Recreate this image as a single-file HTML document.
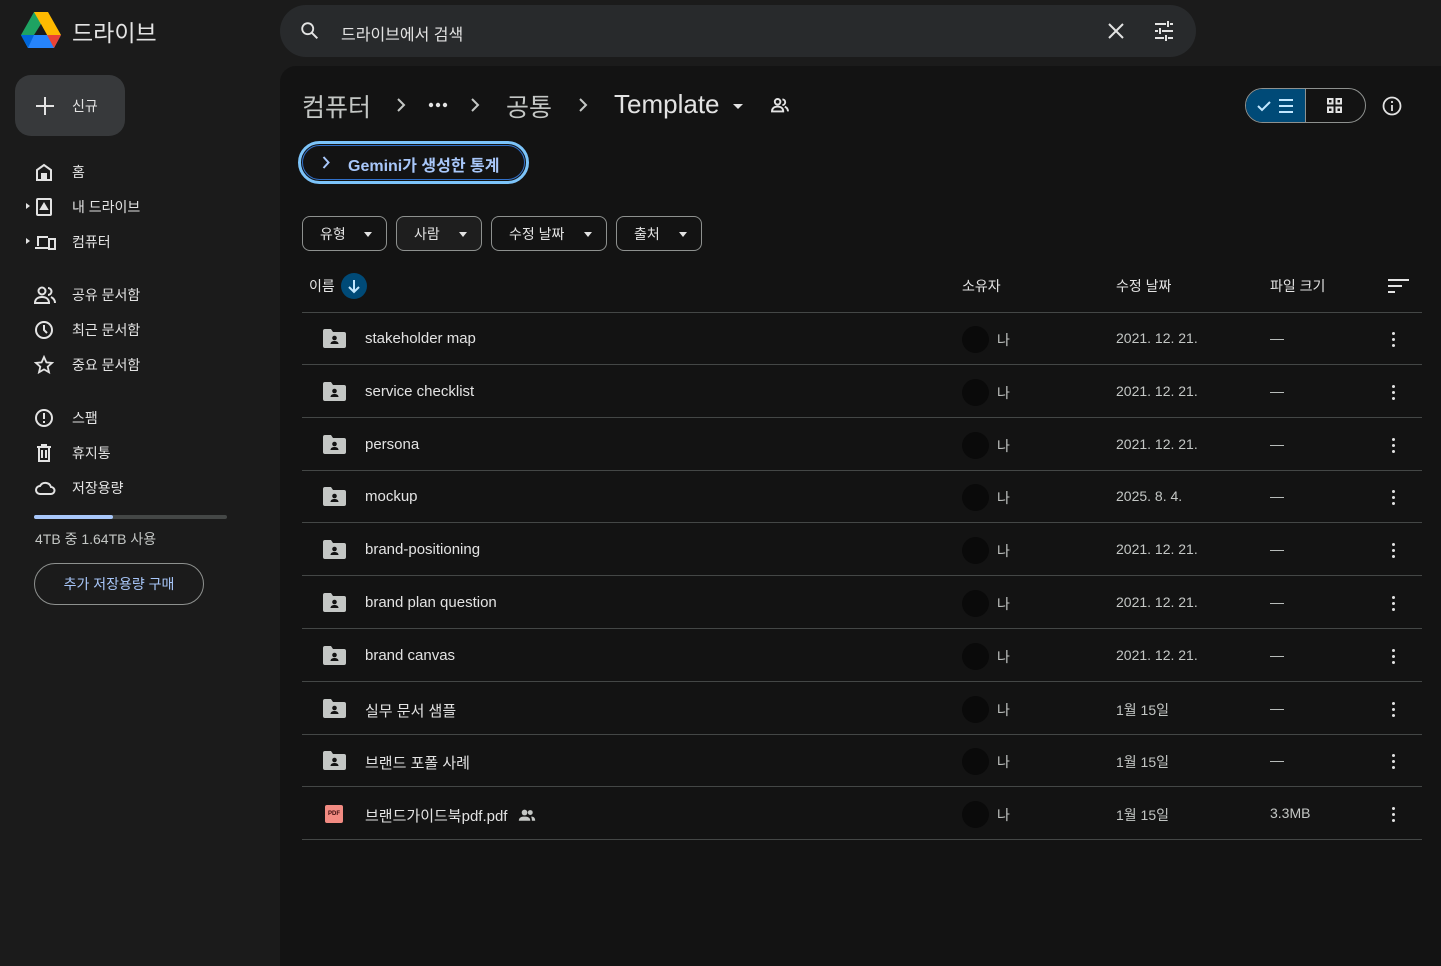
<!DOCTYPE html>
<html><head><meta charset="utf-8"><style>
*{box-sizing:border-box;margin:0;padding:0}
body{width:1441px;height:966px;background:#1b1b1b;font-family:"Liberation Sans","Noto Sans CJK KR",sans-serif;color:#e3e3e3;position:relative;overflow:hidden}
.a{position:absolute}
.nav{position:absolute;left:0;width:270px;height:35px;display:flex;align-items:center;font-size:14px;color:#e3e3e3}
.nav svg{position:absolute;left:34px}
.nav span{position:absolute;left:72px}
.main{position:absolute;left:280px;top:66px;width:1161px;height:900px;background:#131313;border-radius:16px 0 0 0}
.chip{position:absolute;top:216px;height:35px;border:1px solid #8e918f;border-radius:8px;font-size:14px;display:flex;align-items:center;padding-left:17px}
.chip::after{content:"";position:absolute;right:14px;top:15px;border:4px solid transparent;border-top:5px solid #e3e3e3}
.row{position:absolute;left:302px;width:1120px;height:53px;border-bottom:1px solid #444746;font-size:15px}
.row .ic{position:absolute;left:21px;top:17px}
.row .nm{position:absolute;left:63px;top:18px;color:#e3e3e3}
.row .av{position:absolute;left:660px;top:14px;width:27px;height:27px;border-radius:50%;background:#0a0a0a}
.row .me{position:absolute;left:695px;top:18px;color:#c4c7c5;font-size:14px}
.row .dt{position:absolute;left:814px;top:18px;color:#c4c7c5;font-size:14px}
.row .sz{position:absolute;left:968px;top:18px;color:#c4c7c5;font-size:14px}
.row .mr{position:absolute;left:1090px;top:20px;width:4px}
.mr i{display:block;width:3px;height:3px;background:#e3e3e3;border-radius:50%;margin-bottom:3px}
.chev{position:absolute;top:98px}
</style></head><body>
<svg class="a" style="left:21px;top:12px" width="40" height="36" viewBox="0 0 40 36">
<path d="M13 0h14l-7 12z M13 0L0 23l7 13 13-24z" fill="#1ea362"/>
<path d="M27 0l13 23h-14L13 0z" fill="#ffba00"/>
<path d="M0 23h40l-7 13H7z" fill="#2684fc"/>
<path d="M26 23h14l-7 13z" fill="#ea4335"/>
<path d="M0 23l7 13 6-13z" fill="#0066da"/>
<path d="M13 23l7-11 6 11z" fill="#1b1b1b"/>
</svg>
<div class="a" style="left:72px;top:14px;font-size:23px;color:#e3e3e3">드라이브</div>
<div class="a" style="left:280px;top:5px;width:916px;height:52px;background:#282a2c;border-radius:26px"></div>
<svg class="a" style="left:299px;top:20px" width="22" height="22" viewBox="0 0 24 24"><circle cx="9.5" cy="9.5" r="6" stroke="#e3e3e3" stroke-width="2" fill="none"/><path d="M14 14l6 6" stroke="#e3e3e3" stroke-width="2.2"/></svg>
<div class="a" style="left:341px;top:21px;font-size:16px;color:#e3e3e3">드라이브에서 검색</div>
<svg class="a" style="left:1106px;top:21px" width="20" height="20" viewBox="0 0 20 20"><path d="M3 3l14 14M17 3L3 17" stroke="#e3e3e3" stroke-width="2"/></svg>
<svg class="a" style="left:1153px;top:20px" width="22" height="22" viewBox="0 0 22 22" stroke="#e3e3e3" stroke-width="2"><path d="M2 4h11M17 4h3M15 1v6M2 11h3M9 11h11M7 8v6M2 18h9M15 18h5M13 15v6"/></svg>
<div class="a" style="left:15px;top:75px;width:110px;height:61px;background:#37393b;border-radius:16px"></div>
<svg class="a" style="left:35px;top:96px" width="20" height="20"><path d="M10 1v18M1 10h18" stroke="#e3e3e3" stroke-width="2"/></svg>
<div class="a" style="left:72px;top:96px;font-size:14px">신규</div>
<div class="nav" style="top:154px"><svg width="20" height="20" viewBox="0 0 20 20" fill="none" stroke="#e3e3e3" stroke-width="2"><path d="M3 18V8l7-5 7 5v10z"/><rect x="8" y="12" width="4" height="6" fill="#e3e3e3"/></svg><span>홈</span></div>
<div class="nav" style="top:189px"><div class="a" style="left:26px;top:14px;border:3px solid transparent;border-left:4px solid #e3e3e3"></div><svg width="20" height="20" viewBox="0 0 20 20" fill="none" stroke="#e3e3e3" stroke-width="2"><rect x="3" y="2" width="14" height="16" rx="1"/><path d="M7 12l3-5 3 5z" fill="#e3e3e3"/></svg><span>내 드라이브</span></div>
<div class="nav" style="top:224px"><div class="a" style="left:26px;top:14px;border:3px solid transparent;border-left:4px solid #e3e3e3"></div><svg width="22" height="20" viewBox="0 0 22 20" fill="none" stroke="#e3e3e3" stroke-width="2"><path d="M4 14V5h10M1 16h13"/><rect x="15" y="7" width="6" height="10"/></svg><span>컴퓨터</span></div>
<div class="nav" style="top:277px"><svg width="22" height="20" viewBox="0 0 22 20" fill="none" stroke="#e3e3e3" stroke-width="2"><circle cx="8" cy="6" r="3.5"/><path d="M1 18c0-4 3-6 7-6s7 2 7 6z"/><path d="M14 3a3.5 3.5 0 010 7M17 12c2 1 4 3 4 6"/></svg><span>공유 문서함</span></div>
<div class="nav" style="top:312px"><svg width="20" height="20" viewBox="0 0 20 20" fill="none" stroke="#e3e3e3" stroke-width="2"><circle cx="10" cy="10" r="8"/><path d="M10 5v5l3 3"/></svg><span>최근 문서함</span></div>
<div class="nav" style="top:347px"><svg width="20" height="20" viewBox="0 0 20 20" fill="none" stroke="#e3e3e3" stroke-width="1.8"><path d="M10 2l2.4 5.4 5.6.5-4.3 3.8 1.3 5.6L10 14.4l-5 2.9 1.3-5.6L2 7.9l5.6-.5z"/></svg><span>중요 문서함</span></div>
<div class="nav" style="top:400px"><svg width="20" height="20" viewBox="0 0 20 20" fill="none" stroke="#e3e3e3" stroke-width="2"><circle cx="10" cy="10" r="8"/><path d="M10 5v6M10 13v2"/></svg><span>스팸</span></div>
<div class="nav" style="top:435px"><svg width="20" height="20" viewBox="0 0 20 20" fill="none" stroke="#e3e3e3" stroke-width="2"><path d="M3 4h14M5 4v14h10V4M8 7v8M12 7v8M8 4V2h4v2"/></svg><span>휴지통</span></div>
<div class="nav" style="top:470px"><svg width="22" height="20" viewBox="0 0 22 20" fill="none" stroke="#e3e3e3" stroke-width="2"><path d="M6 16a4 4 0 010-8 6 6 0 0111 1 3.5 3.5 0 010 7z"/></svg><span>저장용량</span></div>
<div class="a" style="left:34px;top:515px;width:193px;height:4px;background:#444746;border-radius:2px"></div>
<div class="a" style="left:34px;top:515px;width:79px;height:4px;background:#a8c7fa;border-radius:2px"></div>
<div class="a" style="left:35px;top:529px;font-size:14px;color:#c4c7c5">4TB 중 1.64TB 사용</div>
<div class="a" style="left:34px;top:563px;width:170px;height:42px;border:1px solid #8e918f;border-radius:21px;color:#a8c7fa;font-size:14px;text-align:center;line-height:40px">추가 저장용량 구매</div>

<div class="main"></div>
<div class="a" style="left:302px;top:88px;font-size:25px;color:#c4c7c5">컴퓨터</div>
<svg class="chev" style="left:396px" width="10" height="14" viewBox="0 0 10 14" fill="none" stroke="#c4c7c5" stroke-width="2"><path d="M2 1l6 6-6 6"/></svg>
<svg class="a" style="left:428px;top:102px" width="20" height="6"><circle cx="3" cy="3" r="2.2" fill="#e3e3e3"/><circle cx="10" cy="3" r="2.2" fill="#e3e3e3"/><circle cx="17" cy="3" r="2.2" fill="#e3e3e3"/></svg>
<svg class="chev" style="left:470px" width="10" height="14" viewBox="0 0 10 14" fill="none" stroke="#c4c7c5" stroke-width="2"><path d="M2 1l6 6-6 6"/></svg>
<div class="a" style="left:506px;top:88px;font-size:25px;color:#c4c7c5">공통</div>
<svg class="chev" style="left:578px" width="10" height="14" viewBox="0 0 10 14" fill="none" stroke="#c4c7c5" stroke-width="2"><path d="M2 1l6 6-6 6"/></svg>
<div class="a" style="left:614px;top:89px;font-size:26px;color:#e3e3e3">Template</div>
<div class="a" style="left:733px;top:104px;border:5px solid transparent;border-top:5px solid #e3e3e3"></div>
<svg class="a" style="left:770px;top:97px" width="20" height="16" viewBox="0 0 22 20" fill="none" stroke="#e3e3e3" stroke-width="2.4"><circle cx="8" cy="6" r="3.5"/><path d="M1 18c0-4 3-6 7-6s7 2 7 6z"/><path d="M14 3a3.5 3.5 0 010 7M17 12c2 1 4 3 4 6"/></svg>
<div class="a" style="left:298px;top:141px;width:231px;height:43px;border:3px solid #7cc4fa;border-radius:22px;background:#131313"><div style="position:absolute;inset:1px;border:1px solid #3170c9;border-radius:19px"></div></div>
<svg class="a" style="left:322px;top:156px" width="8" height="13" viewBox="0 0 8 13" fill="none" stroke="#a8c7fa" stroke-width="2"><path d="M1.5 1l5 5.5-5 5.5"/></svg>
<div class="a" style="left:348px;top:152px;font-size:16px;color:#a8c7fa;font-weight:bold">Gemini가 생성한 통계</div>
<div class="a" style="left:1245px;top:88px;width:121px;height:35px;border:1px solid #8e918f;border-radius:18px;overflow:hidden"><div style="position:absolute;left:0;top:0;width:60px;height:35px;background:#004a77;border-right:1px solid #8e918f"></div></div>
<svg class="a" style="left:1256px;top:97px" width="42" height="18" viewBox="0 0 42 18" fill="none" stroke="#c2e7ff" stroke-width="2"><path d="M2 9l4 4 8-8M23 3h14M23 9h14M23 15h14"/></svg>
<svg class="a" style="left:1326px;top:97px" width="17" height="17" viewBox="0 0 17 17" fill="none" stroke="#e3e3e3" stroke-width="2"><rect x="2" y="2" width="4.5" height="4.5"/><rect x="10.5" y="2" width="4.5" height="4.5"/><rect x="2" y="10.5" width="4.5" height="4.5"/><rect x="10.5" y="10.5" width="4.5" height="4.5"/></svg>
<svg class="a" style="left:1382px;top:96px" width="20" height="20" viewBox="0 0 20 20" fill="none" stroke="#e3e3e3" stroke-width="1.8"><circle cx="10" cy="10" r="8.5"/><path d="M10 9v6M10 5v2"/></svg>
<div class="chip" style="left:302px;width:85px">유형</div>
<div class="chip" style="left:396px;width:86px;background:#1e1e1e">사람</div>
<div class="chip" style="left:491px;width:116px">수정 날짜</div>
<div class="chip" style="left:616px;width:86px">출처</div>
<div class="a" style="left:309px;top:276px;font-size:14px">이름</div>
<div class="a" style="left:341px;top:273px;width:26px;height:26px;border-radius:50%;background:#004a77"></div>
<svg class="a" style="left:346px;top:278px" width="16" height="16" viewBox="0 0 16 16" fill="none" stroke="#c2e7ff" stroke-width="2"><path d="M8 2v12M3 9l5 5 5-5"/></svg>
<div class="a" style="left:962px;top:276px;font-size:14px">소유자</div>
<div class="a" style="left:1116px;top:276px;font-size:14px">수정 날짜</div>
<div class="a" style="left:1270px;top:276px;font-size:14px">파일 크기</div>
<svg class="a" style="left:1388px;top:279px" width="21" height="14" viewBox="0 0 21 14" stroke="#e3e3e3" stroke-width="2"><path d="M0 1h21M0 7h14M0 13h7"/></svg>
<div class="a" style="left:302px;top:312px;width:1120px;height:1px;background:#444746"></div>

<div id="rows"></div>
<script>
var d=[["stakeholder map","2021. 12. 21.","—"],["service checklist","2021. 12. 21.","—"],["persona","2021. 12. 21.","—"],["mockup","2025. 8. 4.","—"],["brand-positioning","2021. 12. 21.","—"],["brand plan question","2021. 12. 21.","—"],["brand canvas","2021. 12. 21.","—"],["실무 문서 샘플","1월 15일","—"],["브랜드 포폴 사례","1월 15일","—"],["브랜드가이드북pdf.pdf","1월 15일","3.3MB"]];
var h="";
var fold='<svg class="ic" width="23" height="19" viewBox="0 0 23 19"><path d="M0 2a2 2 0 012-2h6l2 3h11a2 2 0 012 2v12a2 2 0 01-2 2H2a2 2 0 01-2-2z" fill="#c4c7c5"/><circle cx="11.5" cy="9" r="2.3" fill="#131313"/><path d="M7.5 15c0-2 1.8-3 4-3s4 1 4 3z" fill="#131313"/></svg>';
var pdf='<div class="ic" style="left:23px;top:18px;width:18px;height:18px;background:#f28b82;border-radius:2px;font-size:6px;font-weight:bold;color:#3b0c0c;text-align:center;line-height:18px">PDF</div>';
for(var i=0;i<d.length;i++){var t=312+Math.round(i*52.8);
h+='<div class="row" style="top:'+t+'px">'+(i==9?pdf:fold)+'<div class="nm">'+d[i][0]+(i==9?' <svg width="18" height="12" viewBox="0 0 22 14" style="margin-left:6px" fill="#c4c7c5"><circle cx="8" cy="4" r="3.5"/><path d="M1 14c0-4 3-5 7-5s7 1 7 5z"/><circle cx="15" cy="4" r="3"/><path d="M16 9c3 0 5 1 5 5h-4c0-2-.5-4-1-5z"/></svg>':'')+'</div><div class="av"></div><div class="me">나</div><div class="dt">'+d[i][1]+'</div><div class="sz">'+d[i][2]+'</div><div class="mr"><i></i><i></i><i></i></div></div>';}
document.getElementById("rows").innerHTML=h;
</script>
</body></html>
